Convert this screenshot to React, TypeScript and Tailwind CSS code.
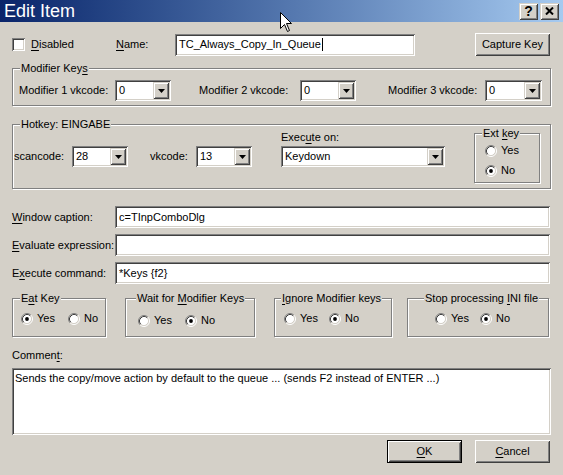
import type { ReactNode } from 'react';

const SUNKEN =
  'shadow-[inset_1px_1px_0_#808080,inset_-1px_-1px_0_#ffffff,inset_2px_2px_0_#404040,inset_-2px_-2px_0_#d4d0c8]';
const RAISED =
  'shadow-[inset_1px_1px_0_#ffffff,inset_-1px_-1px_0_#404040,inset_2px_2px_0_#d4d0c8,inset_-2px_-2px_0_#808080]';
const RAISED_SMALL =
  'shadow-[inset_1px_1px_0_#d4d0c8,inset_-1px_-1px_0_#404040,inset_2px_2px_0_#ffffff,inset_-2px_-2px_0_#808080]';

function U({ children }: { children: ReactNode }) {
  return <span className="underline decoration-1 underline-offset-[2px]">{children}</span>;
}

function Checkbox() {
  return <div className={`h-[13px] w-[13px] shrink-0 bg-white ${SUNKEN}`} />;
}

function Radio({ checked }: { checked?: boolean }) {
  return (
    <svg width="12" height="12" viewBox="0 0 12 12" className="shrink-0">
      <circle cx="6" cy="6" r="4.5" fill="#ffffff" />
      <path d="M2.11 9.89A5.5 5.5 0 0 1 9.89 2.11" fill="none" stroke="#808080" />
      <path d="M9.89 2.11A5.5 5.5 0 0 1 2.11 9.89" fill="none" stroke="#ffffff" />
      <path d="M2.82 9.18A4.5 4.5 0 0 1 9.18 2.82" fill="none" stroke="#404040" />
      <path d="M9.18 2.82A4.5 4.5 0 0 1 2.82 9.18" fill="none" stroke="#d4d0c8" />
      {checked ? <circle cx="6" cy="6" r="1.9" fill="#000000" /> : null}
    </svg>
  );
}

function RadioLabel({ label, checked, className = '' }: { label: string; checked?: boolean; className?: string }) {
  return (
    <div className={`flex h-[13px] items-center gap-[4px] ${className}`}>
      <Radio checked={checked} />
      <span>{label}</span>
    </div>
  );
}

function Edit({ value, className, caret }: { value?: string; className: string; caret?: boolean }) {
  return (
    <div className={`flex items-center bg-white pl-[4px] ${SUNKEN} ${className}`}>
      <span className="whitespace-nowrap">{value}</span>
      {caret ? <span className="ml-[1px] h-[13px] w-[1px] bg-black" /> : null}
    </div>
  );
}

function Combo({ value, className }: { value: string; className: string }) {
  return (
    <div className={`flex h-[21px] shrink-0 bg-white p-[2px] ${SUNKEN} ${className}`}>
      <span className="flex-1 pl-[2px] leading-[17px]">{value}</span>
      <div className={`flex w-[16px] items-center justify-center bg-[#d4d0c8] ${RAISED_SMALL}`}>
        <svg width="7" height="4" viewBox="0 0 7 4">
          <path d="M0 0H7L3.5 4Z" fill="#000000" />
        </svg>
      </div>
    </div>
  );
}

function Button({ children, className = '', isDefault }: { children: ReactNode; className?: string; isDefault?: boolean }) {
  if (isDefault) {
    return (
      <div className={`border border-black ${className}`}>
        <div className={`flex h-full w-full items-center justify-center bg-[#d4d0c8] ${RAISED}`}>{children}</div>
      </div>
    );
  }
  return <div className={`flex items-center justify-center bg-[#d4d0c8] ${RAISED} ${className}`}>{children}</div>;
}

function GroupBox({
  label,
  className = '',
  labelOffset = 'ml-[7px]',
  children,
}: {
  label: ReactNode;
  className?: string;
  labelOffset?: string;
  children: ReactNode;
}) {
  return (
    <div className={`shrink-0 border border-[#808080] shadow-[1px_1px_0_#ffffff,inset_1px_1px_0_#ffffff] ${className}`}>
      <div className={`-mt-[7px] w-fit bg-[#d4d0c8] px-[1px] leading-[13px] ${labelOffset}`}>{label}</div>
      {children}
    </div>
  );
}

function TitleBar() {
  return (
    <div className="relative flex h-[22px] items-center bg-gradient-to-r from-[#0a246a] to-[#a6caf0] pl-[4px] pr-[4px]">
      <span className="text-[18px] leading-[22px] text-white">Edit Item</span>
      <div className="ml-auto flex gap-[2px]">
        <div className={`flex h-[17px] w-[19px] items-center justify-center bg-[#d4d0c8] ${RAISED_SMALL}`}>
          <span className="text-[14px] font-bold leading-[14px]">?</span>
        </div>
        <div className={`flex h-[17px] w-[19px] items-center justify-center bg-[#d4d0c8] ${RAISED_SMALL}`}>
          <svg width="9" height="8" viewBox="0 0 9 8">
            <path d="M1 0.5L8 7.5M8 0.5L1 7.5" stroke="#000000" strokeWidth="2" />
          </svg>
        </div>
      </div>
      {/* mouse cursor over the caption */}
      <svg width="13" height="21" viewBox="0 0 13 21" className="absolute left-[280px] top-[12px]">
        <path d="M0.5 0.5V16.5L4.5 12.5L7.5 19.5L9.5 18.5L6.5 11.5H11.5Z" fill="#ffffff" stroke="#000000" />
      </svg>
    </div>
  );
}

export default function App() {
  return (
    <div className="h-[475px] w-[563px] overflow-hidden bg-[#d4d0c8] font-['Liberation_Sans',Arial,sans-serif] text-[11px] leading-[13px] text-black">
      <TitleBar />

      {/* Disabled / Name / Capture Key */}
      <div className="ml-[12px] mt-[11px] flex h-[23px] items-center">
        <div className="flex w-[104px] items-center gap-[6px]">
          <Checkbox />
          <span>
            <U>D</U>isabled
          </span>
        </div>
        <span className="w-[59px]">
          <U>N</U>ame:
        </span>
        <Edit value="TC_Always_Copy_In_Queue" caret className="h-[22px] w-[240px]" />
        <Button className="ml-[60px] h-[23px] w-[75px]">Capture Key</Button>
      </div>

      {/* Modifier Keys */}
      <GroupBox
        className="ml-[12px] mt-[12px] w-[539px] pb-[4px]"
        label={
          <>
            Modifier Key<U>s</U>
          </>
        }
      >
        <div className="mt-[5px] flex items-center pl-[6px]">
          <span className="w-[96px]">Modifier 1 vkcode:</span>
          <Combo value="0" className="w-[56px]" />
          <span className="ml-[28px] w-[101px]">Modifier 2 vkcode:</span>
          <Combo value="0" className="w-[56px]" />
          <span className="ml-[32px] w-[97px]">Modifier 3 vkcode:</span>
          <Combo value="0" className="w-[57px]" />
        </div>
      </GroupBox>

      {/* Hotkey */}
      <GroupBox className="ml-[12px] mt-[18px] w-[539px] pb-[5px]" label="Hotkey: EINGABE">
        <div className="flex items-start pl-[1px]">
          <div className="mt-[15px] flex items-center">
            <span className="w-[58px]">scancode:</span>
            <Combo value="28" className="w-[56px]" />
            <span className="ml-[22px] w-[46px]">vkcode:</span>
            <Combo value="13" className="w-[56px]" />
          </div>
          <div className="ml-[29px] flex w-[164px] flex-col">
            <span>
              Exec<U>u</U>te on:
            </span>
            <Combo value="Keydown" className="mt-[2px] w-[164px]" />
          </div>
          <GroupBox
            className="ml-[29px] mt-[2px] w-[66px] pb-[5px] pl-[10px]"
            labelOffset="-ml-[3px]"
            label={
              <>
                Ext <U>k</U>ey
              </>
            }
          >
            <RadioLabel label="Yes" className="mt-[4px]" />
            <RadioLabel label="No" checked className="mt-[7px]" />
          </GroupBox>
        </div>
      </GroupBox>

      {/* Text fields */}
      <div className="ml-[12px] mt-[17px] flex flex-col gap-[6px]">
        <div className="flex items-center">
          <span className="w-[103px]">
            <U>W</U>indow caption:
          </span>
          <Edit value="c=TInpComboDlg" className="h-[22px] w-[435px]" />
        </div>
        <div className="flex items-center">
          <span className="w-[103px]">
            <U>E</U>valuate expression:
          </span>
          <Edit className="h-[22px] w-[435px]" />
        </div>
        <div className="flex items-center">
          <span className="w-[103px]">
            E<U>x</U>ecute command:
          </span>
          <Edit value="*Keys {f2}" className="h-[22px] w-[435px]" />
        </div>
      </div>

      {/* Option groups */}
      <div className="ml-[12px] mt-[14px] flex">
        <GroupBox
          className="w-[94px] pb-[11px] pl-[8px]"
          labelOffset="-ml-[1px]"
          label={
            <>
              E<U>a</U>t Key
            </>
          }
        >
          <div className="mt-[7px] flex">
            <RadioLabel label="Yes" checked className="w-[47px]" />
            <RadioLabel label="No" />
          </div>
        </GroupBox>
        <GroupBox
          className="ml-[19px] w-[130px] pb-[9px] pl-[12px]"
          labelOffset="-ml-[2px]"
          label={
            <>
              Wait for <U>M</U>odifier Keys
            </>
          }
        >
          <div className="mt-[9px] flex">
            <RadioLabel label="Yes" className="w-[47px]" />
            <RadioLabel label="No" checked />
          </div>
        </GroupBox>
        <GroupBox
          className="ml-[19px] w-[118px] pb-[11px] pl-[9px]"
          labelOffset="-ml-[3px]"
          label={
            <>
              <U>I</U>gnore Modifier keys
            </>
          }
        >
          <div className="mt-[7px] flex">
            <RadioLabel label="Yes" className="w-[45px]" />
            <RadioLabel label="No" checked />
          </div>
        </GroupBox>
        <GroupBox
          className="ml-[15px] w-[142px] pb-[11px] pl-[27px]"
          labelOffset="-ml-[11px]"
          label={
            <>
              Stop processing <U>I</U>NI file
            </>
          }
        >
          <div className="mt-[7px] flex">
            <RadioLabel label="Yes" className="w-[45px]" />
            <RadioLabel label="No" checked />
          </div>
        </GroupBox>
      </div>

      {/* Comment */}
      <div className="ml-[12px] mt-[12px]">
        Commen<U>t</U>:
      </div>
      <div className={`ml-[12px] mt-[6px] h-[67px] w-[539px] bg-white pl-[3px] pt-[4px] ${SUNKEN}`}>
        Sends the copy/move action by default to the queue ... (sends F2 instead of ENTER ...)
      </div>

      {/* Buttons */}
      <div className="mr-[13px] mt-[5px] flex justify-end gap-[13px]">
        <Button isDefault className="h-[23px] w-[75px]">
          <U>O</U>K
        </Button>
        <Button className="h-[23px] w-[75px]">
          <U>C</U>ancel
        </Button>
      </div>
    </div>
  );
}
